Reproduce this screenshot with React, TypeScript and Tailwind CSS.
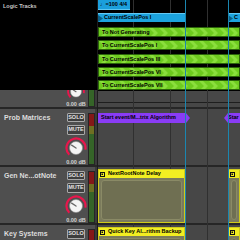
import React from "react";

const sans = "font-['Liberation_Sans','DejaVu_Sans',sans-serif]";

const KnobShape = () => (
  <>
    <path
      d="M4.28 17.72 A9.5 9.5 0 1 1 20.36 12.65"
      fill="none"
      stroke="#e8164c"
      strokeWidth="2.2"
    />
    <circle cx="11" cy="11" r="6.5" fill="#f4f4f4" stroke="#8c8c8c" strokeWidth="0.6" />
    <line x1="11" y1="11" x2="6.6" y2="8.2" stroke="#6a6a6a" strokeWidth="1.4" strokeLinecap="round" />
  </>
);

const Knob = () => (
  <svg width="22" height="22" viewBox="0 0 22 22">
    <KnobShape />
  </svg>
);

// lower part only, for the track cut by the top panel
const KnobBottom = () => (
  <svg width="22" height="12" viewBox="0 9 22 12">
    <KnobShape />
  </svg>
);

const SmallButton = ({ label }: { label: string }) => (
  <div className="w-[18px] h-[10px] flex items-center justify-center rounded-[1px] border border-[#a8a8a8] bg-[#3e3e3e] text-[5.5px] font-bold leading-none text-[#e2e2e2]">
    {label}
  </div>
);

const Meter = () => (
  <div className="mt-[4px] h-[52px] w-[7px] flex flex-col border border-[#262626] bg-[#262626]">
    <div className="h-[12px] bg-[#841818]" />
    <div className="h-[8px] bg-[#6f6f22]" />
    <div className="flex-1 bg-[#356428]" />
  </div>
);

const DbLabel = () => (
  <p className="text-[5.5px] font-bold leading-[6px] text-[#d4d4d4] whitespace-nowrap">0.00 dB</p>
);

const TrackContent = ({ name, short }: { name: string; short?: boolean }) => (
  <div className="h-[56px] shrink-0 flex bg-[#4f4f4f]">
    <div className="w-[65px] pl-[4px] pt-[5px] text-[7px] font-bold leading-[8px] text-[#dcdcdc] whitespace-nowrap">
      {name}
    </div>
    <div className="w-[22px] flex flex-col items-center pt-[4px]">
      <SmallButton label="SOLO" />
      {!short && (
        <>
          <div className="mt-[3px]">
            <SmallButton label="MUTE" />
          </div>
          <div className="mt-[2px]">
            <Knob />
          </div>
          <DbLabel />
        </>
      )}
    </div>
    <div className="w-[1px]" />
    <Meter />
    <div className="w-[2px] bg-[#3a3a3a]" />
  </div>
);

const PartialTrack = () => (
  <div className="h-[17px] flex bg-[#4f4f4f]">
    <div className="w-[65px]" />
    <div className="w-[22px] flex flex-col items-center">
      <KnobBottom />
      <div className="mt-[1px]">
        <DbLabel />
      </div>
    </div>
    <div className="w-[1px]" />
    <div className="h-[17px] w-[7px] border-x border-b border-[#262626] bg-[#356428]" />
    <div className="w-[2px] bg-[#3a3a3a]" />
  </div>
);

const Chevrons = ({ color }: { color: string }) => (
  <svg className="absolute inset-0" width="100%" height="100%">
    <defs>
      <pattern id="chev" width="10" height="10" patternUnits="userSpaceOnUse">
        <path d="M0 0 L4 0 L9 5 L4 10 L0 10 L5 5 Z" fill={color} />
      </pattern>
    </defs>
    <rect width="100%" height="100%" fill="url(#chev)" />
  </svg>
);

const GreenBar = ({ label }: { label: string }) => (
  <div className="relative h-[10px] overflow-hidden border border-[#2c640b] bg-[#6ecb1f]">
    <Chevrons color="#8ade3c" />
    <p className="relative pl-[3px] text-[5.5px] font-bold leading-[8px] text-black whitespace-nowrap">
      {label}
    </p>
  </div>
);

const BlueRegion = ({ label, className }: { label: string; className: string }) => (
  <div className={"h-[9px] flex items-center gap-[1px] overflow-hidden border-t border-[#63c9f3] bg-[#1ca3de] " + className}>
    <svg width="5" height="7" viewBox="0 0 5 7" className="shrink-0">
      <path d="M0 0 L5 3.5 L0 7 Z" fill="#0b5f86" />
    </svg>
    <p className="text-[5.5px] font-bold leading-none text-black whitespace-nowrap">{label}</p>
  </div>
);

const RegionIcon = () => (
  <svg width="5" height="5" viewBox="0 0 5 5" className="shrink-0">
    <rect x="0.5" y="0.5" width="4" height="4" fill="none" stroke="#111" strokeWidth="1" />
    <rect x="1.5" y="1.5" width="1.5" height="1.5" fill="#111" />
  </svg>
);

const YellowRegion = ({ label, className }: { label?: string; className: string }) => (
  <div className={"flex flex-col overflow-hidden border border-[#cfca1c] " + className}>
    <div className="h-[8px] shrink-0 flex items-center gap-[3px] pl-[1px] bg-[#f2ee22]">
      <RegionIcon />
      {label && (
        <p className="text-[5.5px] font-bold leading-none text-black whitespace-nowrap">{label}</p>
      )}
    </div>
    <div className="flex-1 bg-[#7b7b5c] p-[2px]">
      <div className="h-full rounded-[3px] border border-[#8a8a66] bg-[#6f6f52]" />
    </div>
  </div>
);

export default function App() {
  return (
    <div className={"w-[240px] h-[240px] flex overflow-hidden bg-black " + sans}>
      {/* track headers */}
      <div className="w-[98px] shrink-0 flex flex-col border-r border-[#1c1c1c]">
        <div className="h-[90px] shrink-0 bg-black pl-[3px] pt-[4px]">
          <p className="text-[5.5px] font-bold leading-none text-[#c8c8c8]">Logic Tracks</p>
        </div>
        <div className="shrink-0 border-b-2 border-[#262626]">
          <PartialTrack />
        </div>
        <div className="h-[58px] shrink-0 border-b-2 border-[#262626]">
          <TrackContent name="Prob Matrices" />
        </div>
        <div className="h-[58px] shrink-0 border-b-2 border-[#262626]">
          <TrackContent name="Gen Ne...otNote" />
        </div>
        <div className="flex-1 flex flex-col overflow-hidden">
          <TrackContent name="Key Systems" short />
        </div>
      </div>

      {/* arrange area */}
      <div className="relative w-[142px] flex flex-col">
        <div className="absolute inset-0">
          <div className="absolute top-0 bottom-0 left-[35px] w-px bg-[#303030]" />
          <div className="absolute top-0 bottom-0 left-[72px] w-px bg-[#303030]" />
          <div className="absolute top-0 bottom-0 left-[109px] w-px bg-[#303030]" />
        </div>

        <div className="h-[91px] shrink-0 flex flex-col">
          <div className="h-[10px] flex">
            <div className="relative w-[32px] flex items-center pl-[2px] border-b border-[#5cc6f2] bg-[#1b9fdc] text-[5.5px] font-bold leading-none text-black whitespace-nowrap">
              ♩=100 4/4
            </div>
          </div>
          <div className="relative mt-[3px] flex">
            <BlueRegion label="CurrentScalePos I" className="w-[87px]" />
            <div className="w-[43px]" />
            <BlueRegion label="C" className="flex-1" />
          </div>
          <div className="relative mt-[5px] flex flex-col gap-[3.3px]">
            <GreenBar label="To Not Generating" />
            <GreenBar label="To CurrentScalePos I" />
            <GreenBar label="To CurrentScalePos III" />
            <GreenBar label="To CurrentScalePos VI" />
            <GreenBar label="To CurrentScalePos VII" />
          </div>
        </div>

        <div className="h-[18px] shrink-0 border-b-2 border-[#262626] bg-[#474747]">
          <div className="h-[12px] border-b border-[#1e1e1e]" />
        </div>

        <div className="h-[58px] shrink-0 border-b-2 border-[#262626] bg-[#474747] pt-[4px]">
          <div className="relative flex h-[10px]">
            <div className="w-[92px] flex items-center pl-[3px] bg-[#8a3cf5] [clip-path:polygon(0_0,calc(100%-4px)_0,100%_50%,calc(100%-4px)_100%,0_100%)]">
              <p className="text-[5.5px] font-bold leading-none text-black whitespace-nowrap">Start event/M...trix Algorithm</p>
            </div>
            <div className="w-[34px]" />
            <div className="flex-1 flex items-center pl-[4px] overflow-hidden bg-[#8a3cf5] [clip-path:polygon(4px_0,100%_0,100%_100%,4px_100%,0_50%)]">
              <p className="text-[5.5px] font-bold leading-none text-black whitespace-nowrap">Star</p>
            </div>
          </div>
        </div>

        <div className="h-[58px] shrink-0 border-b-2 border-[#262626] bg-[#474747] pt-[2px]">
          <div className="relative flex h-[54px]">
            <YellowRegion label="NextRootNote Delay" className="w-[87px]" />
            <div className="w-[43px]" />
            <YellowRegion className="flex-1" />
          </div>
        </div>

        <div className="flex-1 bg-[#474747] pt-[2px]">
          <div className="relative flex h-[30px]">
            <YellowRegion label="Quick Key Al...rithm Backup" className="w-[87px]" />
            <div className="w-[43px]" />
            <YellowRegion className="flex-1" />
          </div>
        </div>

        <div className="absolute top-0 bottom-0 left-[87px] w-px bg-[#1b86b0] z-10" />
        <div className="absolute top-0 bottom-0 left-[130px] w-px bg-[#1b86b0] z-10" />
      </div>
    </div>
  );
}
